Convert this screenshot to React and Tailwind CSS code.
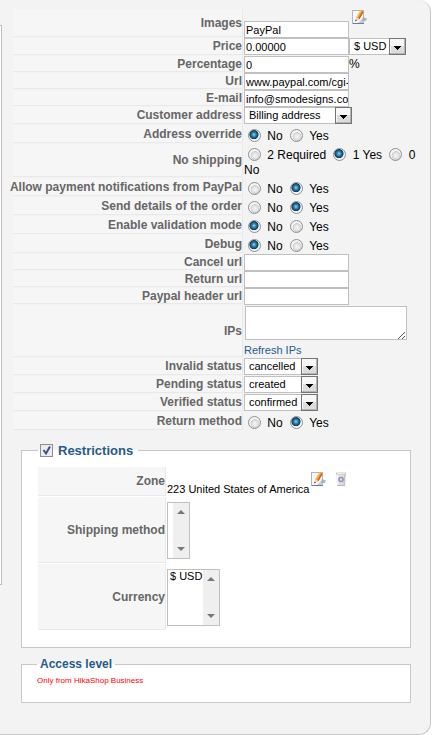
import clsx from 'clsx'

const labelCell =
  'flex shrink-0 items-center justify-end border-r border-b border-[#e9e9e9] bg-[#f6f6f6] text-right text-xs leading-[14px] font-bold whitespace-nowrap text-[#666]'

const inputClass =
  'h-[17px] w-[105px] border border-[#c0c0c0] bg-white pl-px text-[11px] leading-[15px] text-black outline-none'

const Row = ({ label, htmlFor, id, height, narrow, children }) => (
  <div className={clsx('flex gap-px', height)}>
    <label
      id={id}
      htmlFor={htmlFor}
      className={clsx(labelCell, 'mb-px', narrow ? 'w-32' : 'w-[230px]')}
    >
      {label}
    </label>
    <div className="min-w-0 flex-1">{children}</div>
  </div>
)

const TextRow = ({ id, label, value = '', after }) => (
  <Row label={label} htmlFor={id} height="min-h-[17px]">
    <div className="flex text-xs leading-[17px]">
      <input id={id} type="text" defaultValue={value} className={inputClass} />
      {after}
    </div>
  </Row>
)

const Select = ({ id, value, width, label }) => (
  <div className={clsx('relative h-[17px]', width)}>
    <select
      id={id}
      aria-label={label}
      className="block h-[17px] w-full appearance-none border border-[#c0c0c0] bg-white pl-1 text-[11px] leading-[15px] text-black outline-none"
    >
      <option>{value}</option>
    </select>
    <svg
      className="pointer-events-none absolute top-0 right-0"
      width="17"
      height="17"
      viewBox="0 0 17 17"
      shapeRendering="crispEdges"
      aria-hidden="true"
    >
      <rect width="17" height="17" fill="#747474" />
      <rect x="1" y="1" width="15" height="15" fill="#f7f7f7" />
      <rect x="2" y="8" width="13" height="7" fill="#dcdcdc" />
      <path d="M15 1h1v15H1v-1h14z" fill="#b4b4b4" />
      <path d="M5 8h7v1h-1v1h-1v1H9v1H8v-1H7v-1H6V9H5z" fill="#000" />
    </svg>
  </div>
)

const SelectRow = ({ id, label, value, width = 'w-[74px]' }) => (
  <Row label={label} htmlFor={id} height="min-h-[18px]">
    <Select id={id} value={value} width={width} />
  </Row>
)

const Radio = ({ name, id, checked }) => (
  <input
    type="radio"
    name={name}
    id={id}
    defaultChecked={checked}
    className="mr-[3px] ml-1 inline-block size-[13px] appearance-none rounded-full border border-[#8e8f8f] bg-[radial-gradient(circle_at_55%_60%,#f6f6f6_0,#e4e4e4_30%,#cbcfd3_46%,#f4f4f4_52%)] align-[-2px] checked:bg-[radial-gradient(circle_at_45%_42%,#9adcf4_0,#3c94c0_18%,#15567f_38%,#123a55_48%,#f4f4f4_56%)]"
  />
)

const RadioRow = ({ name, label, selected, options = ['No', 'Yes'], height = 'min-h-[19px]' }) => (
  <Row label={label} id={`${name}-label`} height={height}>
    <div
      role="radiogroup"
      aria-labelledby={`${name}-label`}
      className="pt-1 text-xs leading-[15px] text-black"
    >
      {options.map(option => {
        const id = `${name}-${option.replace(' ', '-')}`
        return (
          <span key={option}>
            <Radio name={name} id={id} checked={option === selected} />{' '}
            <label htmlFor={id}>{option}</label>{' '}
          </span>
        )
      })}
    </div>
  </Row>
)

const ListBox = ({ id, width, options = [] }) => (
  <div className={clsx('flex h-[57px] border border-[#c0c0c0] bg-white', width)}>
    <select
      id={id}
      multiple
      className="h-full min-w-0 flex-1 appearance-none overflow-hidden bg-white text-[11px] leading-[13px] text-black outline-none"
    >
      {options.map(o => (
        <option key={o} className="min-h-0 px-0.5 py-0">
          {o}
        </option>
      ))}
    </select>
    <div className="flex w-4 shrink-0 flex-col items-center justify-between bg-[#efefef] py-[7px]">
      <svg width="8" height="4" viewBox="0 0 8 4" aria-hidden="true">
        <path d="M4 0l4 4H0z" fill="#777" />
      </svg>
      <svg width="8" height="4" viewBox="0 0 8 4" aria-hidden="true">
        <path d="M0 0h8L4 4z" fill="#777" />
      </svg>
    </div>
  </div>
)

const EditIcon = () => (
  <svg width="16" height="16" viewBox="0 0 16 16" aria-hidden="true">
    <rect x="0.5" y="1.5" width="11" height="13" fill="#f5f8fc" stroke="#aab6c8" />
    <path d="M1 14.5h11" stroke="#6f7a94" />
    <path d="M6 14l6-6v6z" fill="#c3ccd9" />
    <path d="M11 7.500l2 1.500 2 .5-1 2-2 1-2-1z" fill="#a8b1bd" />
    <path d="M3.500 12l1-4L8.500 1l3 1.500-4 7.500z" fill="#f59a1b" />
    <path d="M6.500 9.500l4-7 1 .5-4 7z" fill="#d9480f" />
    <path d="M5 8l4-6.500" stroke="#ffd36b" />
    <path d="M3.500 12l1-4 2.800 2z" fill="#f3d9b0" />
    <path d="M3.200 12.500l.4-2 1.200 1z" fill="#333" />
  </svg>
)

const TrashIcon = () => (
  <svg width="16" height="16" viewBox="0 0 16 16" aria-hidden="true">
    <path d="M3.500 3h9l-.5 12H4z" fill="#dedede" />
    <path d="M3.500 3h2v12H4z" fill="#f1f1f1" />
    <path d="M11 3h1.500L12 15h-1.500z" fill="#c4c4c0" />
    <path d="M3 1.500h10v2H3z" fill="#c6c6c0" />
    <path d="M4 2.500h8" stroke="#ececec" />
    <path d="M4 14.500h8" stroke="#b5b5b5" />
    <circle cx="8" cy="8.500" r="2" fill="#e3e8f5" stroke="#8492bd" strokeWidth="1.500" />
  </svg>
)

const fieldsetClass = 'mr-[19px] ml-[19px] border border-[#c8c8c8] bg-white pr-4'
const legendClass = 'flex items-center font-bold text-[#255a8c]'

const App = () => (
  <div className="flex items-start bg-white pr-1.5 font-['Liberation_Sans',Arial,sans-serif]">
    <div className="flex min-w-0 flex-1 items-start rounded-r-xl border-r border-b border-[#c8c8c8] bg-[#f3f3f3]">
      <div className="mt-[25px] h-[560px] w-0.5 shrink-0 border-y border-r border-[#c0c0c0] bg-white" />
      <form className="min-w-0 flex-1 pt-[9px] pb-[31px]" onSubmit={e => e.preventDefault()}>
        <div className="pl-[11px]">
          <Row label="Images" htmlFor="images" height="min-h-[29px]">
            <div className="flex h-full items-end">
              <input id="images" type="text" defaultValue="PayPal" className={inputClass} />
              <button type="button" aria-label="Edit images" className="ml-[3px] self-start">
                <EditIcon />
              </button>
            </div>
          </Row>
          <Row label="Price" htmlFor="price" height="min-h-[18px]">
            <div className="flex items-end">
              <input id="price" type="text" defaultValue="0.00000" className={inputClass} />
              <Select id="price-currency" label="Price currency" value="$ USD" width="w-[57px]" />
            </div>
          </Row>
          <TextRow id="percentage" label="Percentage" value="0" after="%" />
          <TextRow id="url" label="Url" value="www.paypal.com/cgi-bin/webscr" />
          <TextRow id="email" label="E-mail" value="info@smodesigns.com" />
          <SelectRow
            id="customer-address"
            label="Customer address"
            value="Billing address"
            width="w-[108px]"
          />
          <RadioRow name="override" label="Address override" selected="No" />
          <RadioRow
            name="no-shipping"
            label="No shipping"
            options={['2 Required', '1 Yes', '0 No']}
            selected="1 Yes"
            height="min-h-[34px]"
          />
          <RadioRow
            name="notifications"
            label="Allow payment notifications from PayPal"
            selected="Yes"
          />
          <RadioRow name="details" label="Send details of the order" selected="Yes" />
          <RadioRow name="validation" label="Enable validation mode" selected="No" />
          <RadioRow name="debug" label="Debug" selected="No" />
          <TextRow id="cancel-url" label="Cancel url" />
          <TextRow id="return-url" label="Return url" />
          <TextRow id="header-url" label="Paypal header url" />
          <Row label="IPs" htmlFor="ips" height="min-h-[53px]">
            <div className="relative mt-px ml-px h-[34px] w-[162px]">
              <textarea
                id="ips"
                className="block h-full w-full resize-none border border-[#c0c0c0] bg-white p-0.5 text-[11px] outline-none"
              />
              <svg
                className="pointer-events-none absolute right-px bottom-px"
                width="8"
                height="8"
                viewBox="0 0 8 8"
                aria-hidden="true"
              >
                <path d="M0 8l7-7M4 8l3-3" stroke="#555" fill="none" />
              </svg>
            </div>
            <a href="#refresh" className="mt-1 block text-[11px] leading-[13px] text-[#255a8c]">
              Refresh IPs
            </a>
          </Row>
          <SelectRow id="invalid" label="Invalid status" value="cancelled" />
          <SelectRow id="pending" label="Pending status" value="created" />
          <SelectRow id="verified" label="Verified status" value="confirmed" />
          <RadioRow name="return-method" label="Return method" selected="Yes" />
        </div>

        <fieldset className={clsx(fieldsetClass, 'mt-[11px] pt-2 pb-4 pl-4')}>
          <legend className={clsx(legendClass, 'pr-[5px] pl-0.5 text-[13px] leading-[17px]')}>
            <span className="relative mr-[5px] size-[13px]">
              <input
                id="restrictions"
                type="checkbox"
                defaultChecked
                className="block size-[13px] appearance-none border border-[#8e8f8f] bg-[#e9ecef]"
              />
              <svg
                className="pointer-events-none absolute top-0 left-0"
                width="13"
                height="13"
                viewBox="0 0 13 13"
                aria-hidden="true"
              >
                <path d="M3.500 6l2.500 3.500L10 2.500" stroke="#3d4f8f" strokeWidth="2" fill="none" />
              </svg>
            </span>
            <label htmlFor="restrictions">Restrictions</label>
          </legend>
          <Row narrow label="Zone" id="zone-label" height="min-h-[30px]">
            <div className="flex h-full items-start pt-1 text-black">
              <span className="mt-3 text-[11px] leading-[13px]">223 United States of America</span>
              <button type="button" aria-label="Edit zone" className="ml-0.5">
                <EditIcon />
              </button>
              <button type="button" aria-label="Delete zone" className="ml-1.5">
                <TrashIcon />
              </button>
            </div>
          </Row>
          <Row narrow label="Shipping method" htmlFor="shipping" height="min-h-[67px]">
            <div className="pt-[5px]">
              <ListBox id="shipping" width="w-[23px]" />
            </div>
          </Row>
          <Row narrow label="Currency" htmlFor="currency" height="min-h-[67px]">
            <div className="pt-[5px]">
              <ListBox id="currency" width="w-[53px]" options={['$ USD']} />
            </div>
          </Row>
        </fieldset>

        <fieldset className={clsx(fieldsetClass, 'mt-[9px] pt-[3px] pb-[15px] pl-[15px]')}>
          <legend className={clsx(legendClass, 'px-[3px] text-xs leading-[15px]')}>
            Access level
          </legend>
          <p className="text-[8px] leading-3 text-[#f00]">Only from HikaShop Business</p>
        </fieldset>
      </form>
    </div>
  </div>
)

export default App
